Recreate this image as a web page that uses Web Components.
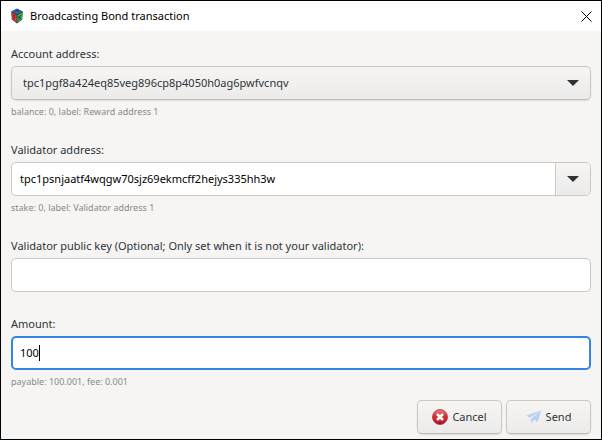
<!DOCTYPE html>
<html lang="en">
<head>
<meta charset="utf-8">
<title>Broadcasting Bond transaction</title>
<style>
  html, body { height: 100%; margin: 0; }
  body {
    --text: #2e3436;
    --line: #cdc7c2;
    --hint: #868988;
    --face: linear-gradient(#f6f5f4, #edebe9);
    font: 11px/16px "Noto Sans", "Open Sans", sans-serif;
    color: var(--text);
  }
</style>
</head>
<body>
<bond-dialog></bond-dialog>

<script>
const define = (name, html, setup) => {
  const template = document.createElement('template');
  template.innerHTML = html;
  customElements.define(name, class extends HTMLElement {
    connectedCallback() {
      if (this.shadowRoot) return;
      const root = this.attachShadow({ mode: 'open' });
      root.append(template.content.cloneNode(true));
      if (setup) setup(this, root);
    }
  });
};

const arrow = '<svg class="arrow" width="12" height="6" viewBox="0 0 12 6" aria-hidden="true"><path d="M0 0h12L6 6z" fill="#2e3436"/></svg>';

define('title-bar', `
  <style>
    :host { display: flex; align-items: center; gap: 6px; height: 30px; padding: 0 9px; background: #fff; color: #000; }
    svg { flex: none; display: block; }
    h1 { flex: 1; margin: 0; font: inherit; }
    button { display: flex; padding: 0; border: 0; background: none; }
  </style>
  <svg width="14" height="16" viewBox="0 0 14 16" aria-hidden="true">
    <path d="M7 .6 12.8 3.4 12.2 11.4 7 15.4 1.8 11.4 1.2 3.4z" fill="#333338"/>
    <path d="M7 .9 12.4 3.6 7 6.2 1.6 3.6z" fill="#3564b4"/>
    <path d="M1.5 4.3 6.6 6.9v7.5L2.1 11z" fill="#dd3b3b"/>
    <path d="M12.5 4.3 7.4 6.9v7.5l4.5-3.4z" fill="#27b944"/>
    <path d="M5 3.6 7 2.6l2 1M3 6.8l2.2 1.1M4.1 7.5v3.8M9 8v3.8M11 7 9.2 9.4l1.8 1" fill="none" stroke="#28282c" stroke-width=".8"/>
  </svg>
  <h1><slot></slot></h1>
  <button type="button" aria-label="Close">
    <svg width="11" height="11" viewBox="0 0 11 11"><path d="M.5.5l10 10M10.5.5l-10 10" stroke="#000" stroke-width="1"/></svg>
  </button>
`);

define('form-field', `
  <style>
    :host { display: block; }
    label { display: block; margin-bottom: 4px; }
    .box {
      display: flex; align-items: stretch; position: relative; box-sizing: border-box; height: 34px;
      border: 1px solid var(--line); border-radius: 5px; background: #fff; overflow: hidden;
    }
    input, select { font: inherit; color: #000; border: 0; margin: 0; outline: 0; background: none; min-width: 0; }
    input { flex: 1; padding: 0 8px; }
    select { flex: 1; appearance: none; padding: 0 40px 0 11px; color: var(--text); }
    .arrow { display: block; }
    .select { background: var(--face); border-bottom-color: #bfb8b1; box-shadow: 0 1px 2px #0000001a; }
    .select .arrow { position: absolute; right: 11px; top: 50%; margin-top: -3px; pointer-events: none; }
    .box button { display: flex; align-items: center; justify-content: center; width: 35px; padding: 0; border: 0; border-left: 1px solid var(--line); background: var(--face); }
    .active { border: 2px solid #3584e4; }
    .active input { flex: none; field-sizing: content; padding: 0 0 0 7px; caret-color: transparent; }
    .caret { align-self: center; width: 1px; height: 16px; background: #000; }
    p { margin: 6px 0 0; font-size: 9px; line-height: 12px; color: var(--hint); }
  </style>
  <label for="control"></label>
  <div class="box"></div>
`, (host, root) => {
  const box = root.querySelector('.box');
  const kind = host.getAttribute('kind');
  const value = host.getAttribute('value') || '';
  root.querySelector('label').textContent = host.getAttribute('label');
  if (kind === 'select') {
    box.classList.add('select');
    box.innerHTML = '<select id="control"><option></option></select>' + arrow;
    box.querySelector('option').textContent = value;
  } else {
    box.innerHTML = '<input id="control" type="text" autocomplete="off" spellcheck="false">';
    box.querySelector('input').value = value;
    if (kind === 'combo') box.insertAdjacentHTML('beforeend', '<button type="button" aria-label="Show addresses">' + arrow + '</button>');
    if (kind === 'active') {
      box.classList.add('active');
      box.insertAdjacentHTML('beforeend', '<span class="caret"></span>');
      box.addEventListener('click', () => box.querySelector('input').focus());
    }
  }
  if (host.hasAttribute('hint')) {
    const p = document.createElement('p');
    p.textContent = host.getAttribute('hint');
    root.append(p);
  }
});

define('action-button', `
  <style>
    :host { display: block; }
    button {
      display: flex; align-items: center; justify-content: center; gap: 4px; box-sizing: border-box;
      width: 100%; height: 34px; padding: 0; border: 1px solid var(--line); border-bottom-color: #bfb8b1; border-radius: 5px;
      background: var(--face); box-shadow: 0 1px 2px #0000001a; font: inherit; color: inherit;
    }
  </style>
  <button type="button"><slot name="icon"></slot><slot></slot></button>
`);

define('bond-dialog', `
  <style>
    :host { display: flex; flex-direction: column; box-sizing: border-box; min-height: 100%; border: 1px solid #000; background: #f6f5f4; }
    form { display: flex; flex-direction: column; gap: 24px; padding: 15px 10px 5px; }
    footer { display: flex; justify-content: flex-end; gap: 4px; margin-top: -12px; }
    action-button { width: 85px; }
    svg { display: block; }
  </style>
  <title-bar>Broadcasting Bond transaction</title-bar>
  <form>
    <form-field kind="select" label="Account address:" value="tpc1pgf8a424eq85veg896cp8p4050h0ag6pwfvcnqv" hint="balance: 0, label: Reward address 1"></form-field>
    <form-field kind="combo" label="Validator address:" value="tpc1psnjaatf4wqgw70sjz69ekmcff2hejys335hh3w" hint="stake: 0, label: Validator address 1"></form-field>
    <form-field kind="text" label="Validator public key (Optional; Only set when it is not your validator):"></form-field>
    <form-field kind="active" label="Amount:" value="100" hint="payable: 100.001, fee: 0.001"></form-field>
    <footer>
      <action-button>
        <svg slot="icon" width="16" height="16" viewBox="0 0 16 16" aria-hidden="true">
          <defs><linearGradient id="red" x1="0" y1="0" x2="0" y2="1"><stop offset="0" stop-color="#e8837f"/><stop offset=".4" stop-color="#d8343a"/><stop offset=".75" stop-color="#c4202c"/><stop offset="1" stop-color="#7c1a48"/></linearGradient></defs>
          <circle cx="8" cy="8" r="7.5" fill="url(#red)" stroke="#b3303c" stroke-width=".8"/>
          <path d="M5 5l6 6M11 5l-6 6" stroke="#fff" stroke-width="2.5"/>
        </svg>Cancel</action-button>
      <action-button>
        <svg slot="icon" width="16" height="16" viewBox="0 0 16 16" aria-hidden="true">
          <path d="M15.2 1.6.4 6.6l3.6 2.2z M15.2 1.6 5 9.8l.4 4.6 2-3z M15.2 1.6 7.6 10.6l4.2 2.4z" fill="#b9d0f4"/>
        </svg>Send</action-button>
    </footer>
  </form>
`);
</script>
</body>
</html>
